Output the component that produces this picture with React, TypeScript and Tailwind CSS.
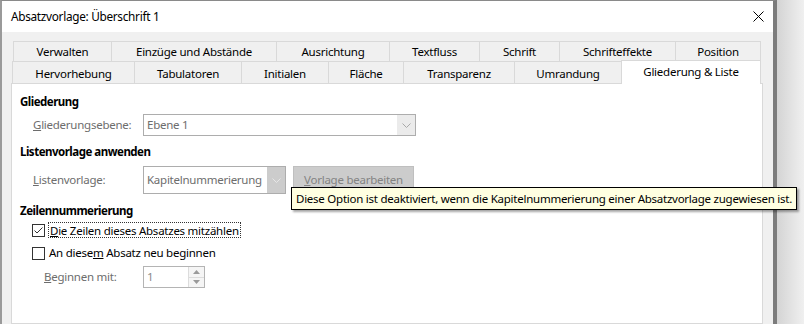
import React from 'react';

const row1 = [
    { label: 'Verwalten', w: 'w-[98px]' },
    { label: 'Einzüge und Abstände', w: 'w-[165px]' },
    { label: 'Ausrichtung', w: 'w-[113px]' },
    { label: 'Textfluss', w: 'w-[90px]' },
    { label: 'Schrift', w: 'w-[80px]' },
    { label: 'Schrifteffekte', w: 'w-[116px]' },
    { label: 'Position', w: 'w-[86px] border-r' },
];

const row2 = [
    { label: 'Hervorhebung', w: 'w-[122px]' },
    { label: 'Tabulatoren', w: 'w-[107px]' },
    { label: 'Initialen', w: 'w-[87px]' },
    { label: 'Fläche', w: 'w-[75px]' },
    { label: 'Transparenz', w: 'w-[111px]' },
    { label: 'Umrandung', w: 'w-[107px]' },
];

function Chevron({ color }: { color: string }) {
    return (
        <svg width="9" height="5" viewBox="0 0 9 5">
            <path d="M0.5 0.5 L4.5 4.5 L8.5 0.5" fill="none" stroke={color} strokeWidth="1" />
        </svg>
    );
}

export default function App() {
    return (
        <div className="w-[804px] h-[324px] overflow-hidden flex bg-[#ececec] font-['Noto_Sans',sans-serif] text-[11.5px] tracking-[-0.25px] text-black">
            <div className="w-[777px] h-full flex flex-col border-t border-l-2 border-r-4 border-t-[#8a8a8a] border-l-[#9a9a9a] border-r-[#7c7c7c] relative">
                {/* title bar */}
                <div className="h-[31px] shrink-0 bg-white flex items-center justify-between pl-[9px] pr-[9px]">
                    <span className="text-[11.8px] tracking-[-0.3px]">Absatzvorlage: Überschrift 1</span>
                    <svg width="11" height="11" viewBox="0 0 11 11">
                        <path d="M0.5 0.5 L10.5 10.5 M10.5 0.5 L0.5 10.5" stroke="#000" strokeWidth="1" />
                    </svg>
                </div>

                <div className="flex-1 bg-[#f0f0f0] pt-[9px] pl-[9px] pr-[10px] flex flex-col">
                    <div className="flex h-[20px] ml-[2px]">
                        {row1.map((t) => (
                            <div key={t.label} className={`${t.w} flex items-center justify-center border-t border-l border-[#d9d9d9]`}>
                                {t.label}
                            </div>
                        ))}
                    </div>
                    <div className="flex h-[22px] ml-[1px]">
                        {row2.map((t) => (
                            <div key={t.label} className={`${t.w} flex items-center justify-center pt-[2px] border-t border-l border-[#d9d9d9]`}>
                                {t.label}
                            </div>
                        ))}
                        <div className="w-[140px] h-[24px] -mt-px relative z-10 bg-white flex items-center justify-center pb-[1px] border-t border-l border-r border-[#d9d9d9]">
                            Gliederung &amp; Liste
                        </div>
                    </div>

                    <div className="flex-1 bg-white border border-[#d9d9d9] pl-[8px] pt-[10px] flex flex-col">
                        <div className="font-bold tracking-[-0.5px] leading-[16px]">Gliederung</div>
                        <div className="flex items-center mt-[4px] h-[22px] pl-[13px]">
                            <span className="w-[110px] text-[#6d6d6d]"><span className="underline">G</span>liederungsebene:</span>
                            <div className="w-[273px] h-[22px] border border-[#adadad] flex">
                                <span className="flex-1 pl-[3px] leading-[20px] text-[#6d6d6d]">Ebene 1</span>
                                <div className="w-[18px] bg-[#ebebeb] flex items-center justify-center">
                                    <Chevron color="#a8a8a8" />
                                </div>
                            </div>
                        </div>

                        <div className="font-bold tracking-[-0.5px] leading-[16px] mt-[8px]">Listenvorlage anwenden</div>
                        <div className="flex items-center mt-[6px] h-[28px] pl-[13px]">
                            <span className="w-[110px] text-[#6d6d6d]"><span className="underline">L</span>istenvorlage:</span>
                            <div className="w-[143px] h-[28px] border border-[#adadad] flex">
                                <span className="flex-1 pl-[3px] leading-[26px] text-[#6d6d6d] whitespace-nowrap overflow-hidden">Kapitelnummerierung</span>
                                <div className="w-[18px] bg-[#cccccc] flex items-center justify-center">
                                    <Chevron color="#e6e6e6" />
                                </div>
                            </div>
                            <div className="ml-[7px] w-[121px] h-[28px] bg-[#cccccc] border border-[#bfbfbf] text-[#838383] flex items-center justify-center">
                                <span><span className="underline">V</span>orlage bearbeiten</span>
                            </div>
                        </div>

                        <div className="font-bold tracking-[-0.5px] leading-[16px] mt-[9px]">Zeilennummerierung</div>
                        <div className="flex items-center mt-[3px] h-[16px] pl-[12px]">
                            <div className="w-[13px] h-[13px] border border-[#333333] bg-white flex items-center justify-center">
                                <svg width="11" height="11" viewBox="0 0 11 11">
                                    <path d="M1.5 5.5 L4 8 L9.5 2.5" fill="none" stroke="#333" strokeWidth="1" />
                                </svg>
                            </div>
                            <span className="ml-[3px] px-[1px] h-[16px] leading-[15px] border border-dotted border-[#333]">
                                <span className="underline">D</span>ie Zeilen dieses Absatzes mitzählen
                            </span>
                        </div>
                        <div className="flex items-center mt-[7px] h-[16px] pl-[12px]">
                            <div className="w-[13px] h-[13px] border border-[#333333] bg-white" />
                            <span className="ml-[4px]">An diese<span className="underline">m</span> Absatz neu beginnen</span>
                        </div>
                        <div className="flex items-center mt-[5px] h-[22px] pl-[24px]">
                            <span className="w-[99px] text-[#6d6d6d]"><span className="underline">B</span>eginnen mit:</span>
                            <div className="w-[62px] h-[22px] border border-[#b4b4b4] flex">
                                <span className="flex-1 pl-[3px] leading-[20px] text-[#8a8a8a]">1</span>
                                <div className="w-[16px] flex flex-col border-l border-[#dcdcdc]">
                                    <div className="flex-1 flex items-center justify-center border-b border-[#dcdcdc] bg-[#f5f5f5]">
                                        <svg width="7" height="4" viewBox="0 0 7 4"><path d="M0 4 L3.5 0 L7 4 Z" fill="#9a9a9a" /></svg>
                                    </div>
                                    <div className="flex-1 flex items-center justify-center bg-[#f5f5f5]">
                                        <svg width="7" height="4" viewBox="0 0 7 4"><path d="M0 0 L3.5 4 L7 0 Z" fill="#9a9a9a" /></svg>
                                    </div>
                                </div>
                            </div>
                        </div>
                    </div>
                </div>

                {/* tooltip */}
                <div className="absolute left-[289px] top-[186px] h-[23px] px-[4px] flex items-center bg-[#ffffe1] border border-black shadow-[2px_2px_2px_rgba(0,0,0,0.35)] whitespace-nowrap z-20">
                    Diese Option ist deaktiviert, wenn die Kapitelnummerierung einer Absatzvorlage zugewiesen ist.
                </div>
            </div>
            <div className="flex-1 h-full bg-gradient-to-r from-[#d4d4d4] to-[#f0f0f0]" />
        </div>
    );
}
